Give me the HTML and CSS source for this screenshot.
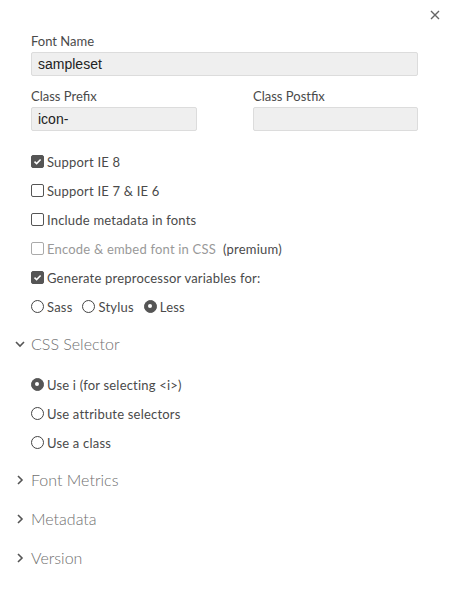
FILE: index.html
```html
<!DOCTYPE html>
<html>
<head>
<meta charset="utf-8">
<link rel="stylesheet" href="styles.css">
</head>
<body>
<div class="panel">
  <div class="close-row">
    <span class="close" aria-label="Close">
      <svg width="10" height="10" viewBox="0 0 10 10"><path d="M1 1 L9 9 M9 1 L1 9" stroke="#666" stroke-width="1.4" fill="none"/></svg>
    </span>
  </div>

  <div class="form">
    <div class="field">
      <div class="label">Font Name</div>
      <div class="input">sampleset</div>
    </div>
    <div class="two-col">
      <div class="field">
        <div class="label">Class Prefix</div>
        <div class="input">icon-</div>
      </div>
      <div class="field">
        <div class="label">Class Postfix</div>
        <div class="input"></div>
      </div>
    </div>

    <div class="options">
      <div class="opt"><span class="cb checked"><svg width="9" height="9" viewBox="0 0 9 9"><path d="M1.5 4.6 L3.6 6.6 L7.6 2.4" stroke="#fff" stroke-width="1.5" fill="none"/></svg></span>Support IE 8</div>
      <div class="opt"><span class="cb"></span>Support IE 7 &amp; IE 6</div>
      <div class="opt"><span class="cb"></span>Include metadata in fonts</div>
      <div class="opt disabled"><span class="cb"></span>Encode &amp; embed font in CSS  <span class="premium">(premium)</span></div>
      <div class="opt"><span class="cb checked"><svg width="9" height="9" viewBox="0 0 9 9"><path d="M1.5 4.6 L3.6 6.6 L7.6 2.4" stroke="#fff" stroke-width="1.5" fill="none"/></svg></span>Generate preprocessor variables for:</div>
      <div class="opt radios">
        <span class="ritem"><span class="rb"></span>Sass</span>
        <span class="ritem"><span class="rb"></span>Stylus</span>
        <span class="ritem"><span class="rb checked"></span>Less</span>
      </div>
    </div>
  </div>

  <div class="section open">
    <div class="sec-head">
      <svg class="chev" width="10" height="10" viewBox="0 0 10 10"><path d="M1 3 L5 7 L9 3" stroke="#555" stroke-width="1.6" fill="none"/></svg>
      CSS Selector
    </div>
    <div class="sec-body">
      <div class="opt"><span class="rb checked"></span>Use i (for selecting &lt;i&gt;)</div>
      <div class="opt"><span class="rb"></span>Use attribute selectors</div>
      <div class="opt"><span class="rb"></span>Use a class</div>
    </div>
  </div>

  <div class="section">
    <div class="sec-head">
      <svg class="chev" width="10" height="10" viewBox="0 0 10 10"><path d="M3 1 L7 5 L3 9" stroke="#555" stroke-width="1.6" fill="none"/></svg>
      Font Metrics
    </div>
  </div>
  <div class="section">
    <div class="sec-head">
      <svg class="chev" width="10" height="10" viewBox="0 0 10 10"><path d="M3 1 L7 5 L3 9" stroke="#555" stroke-width="1.6" fill="none"/></svg>
      Metadata
    </div>
  </div>
  <div class="section">
    <div class="sec-head">
      <svg class="chev" width="10" height="10" viewBox="0 0 10 10"><path d="M3 1 L7 5 L3 9" stroke="#555" stroke-width="1.6" fill="none"/></svg>
      Version
    </div>
  </div>
</div>
</body>
</html>
```

FILE: styles.css
```css
html, body {
  margin: 0;
  padding: 0;
  background: #fff;
}
body {
  font-family: Lato, "Noto Sans", "DejaVu Sans", sans-serif;
  font-size: 13px;
  color: #4a4a4a;
}
.panel {
  width: 450px;
  padding-left: 15px;
  box-sizing: border-box;
}
.close-row {
  display: flex;
  justify-content: flex-end;
  height: 33px;
  padding-right: 10px;
  padding-top: 10px;
  box-sizing: border-box;
}
.close {
  display: block;
  width: 10px;
  height: 10px;
}
.close svg { display: block; }

.form {
  padding-left: 16px;
  width: 387px;
}
.field {
  display: flex;
  flex-direction: column;
}
.label {
  line-height: 16px;
  height: 16px;
  margin-bottom: 3px;
  color: #4a4a4a;
}
.input {
  height: 24px;
  box-sizing: border-box;
  background: #efefef;
  border: 1px solid #dcdcdc;
  border-radius: 2px;
  font-family: "Liberation Sans", Arial, sans-serif;
  font-size: 14px;
  color: #222;
  line-height: 22px;
  padding-left: 6px;
}
.two-col {
  display: grid;
  grid-template-columns: 166px 165px;
  column-gap: 56px;
  margin-top: 12px;
}
.options {
  margin-top: 16px;
}
.opt {
  display: flex;
  align-items: center;
  height: 29px;
  white-space: pre;
  letter-spacing: 0.2px;
}
.cb {
  width: 13px;
  height: 13px;
  box-sizing: border-box;
  border: 1.5px solid #555;
  border-radius: 2px;
  margin-right: 3px;
  display: flex;
  align-items: center;
  justify-content: center;
  flex: none;
}
.cb.checked {
  background: #555;
}
.cb svg { display: block; }
.disabled { color: #999; }
.disabled .cb { border-color: #aaa; }
.premium { color: #4a4a4a; }

.radios .ritem {
  display: flex;
  align-items: center;
  margin-right: 10px;
}
.rb {
  width: 13px;
  height: 13px;
  box-sizing: border-box;
  border: 1.5px solid #444;
  border-radius: 50%;
  margin-right: 3px;
  position: relative;
  flex: none;
}
.rb.checked {
  background: #555;
  border-color: #555;
}
.rb.checked::after {
  content: "";
  position: absolute;
  left: 3px;
  top: 3px;
  width: 4px;
  height: 4px;
  border-radius: 50%;
  background: #fff;
}

.section .sec-head {
  display: flex;
  align-items: center;
  height: 39px;
  font-size: 16px;
  font-weight: 300;
  color: #6f6f6f;
}
.section.open .sec-head {
  margin-top: 3px;
}
.chev {
  display: block;
  margin-right: 6px;
}
.sec-body {
  padding-left: 16px;
  margin-top: 7px;
  margin-bottom: 3px;
}
```
